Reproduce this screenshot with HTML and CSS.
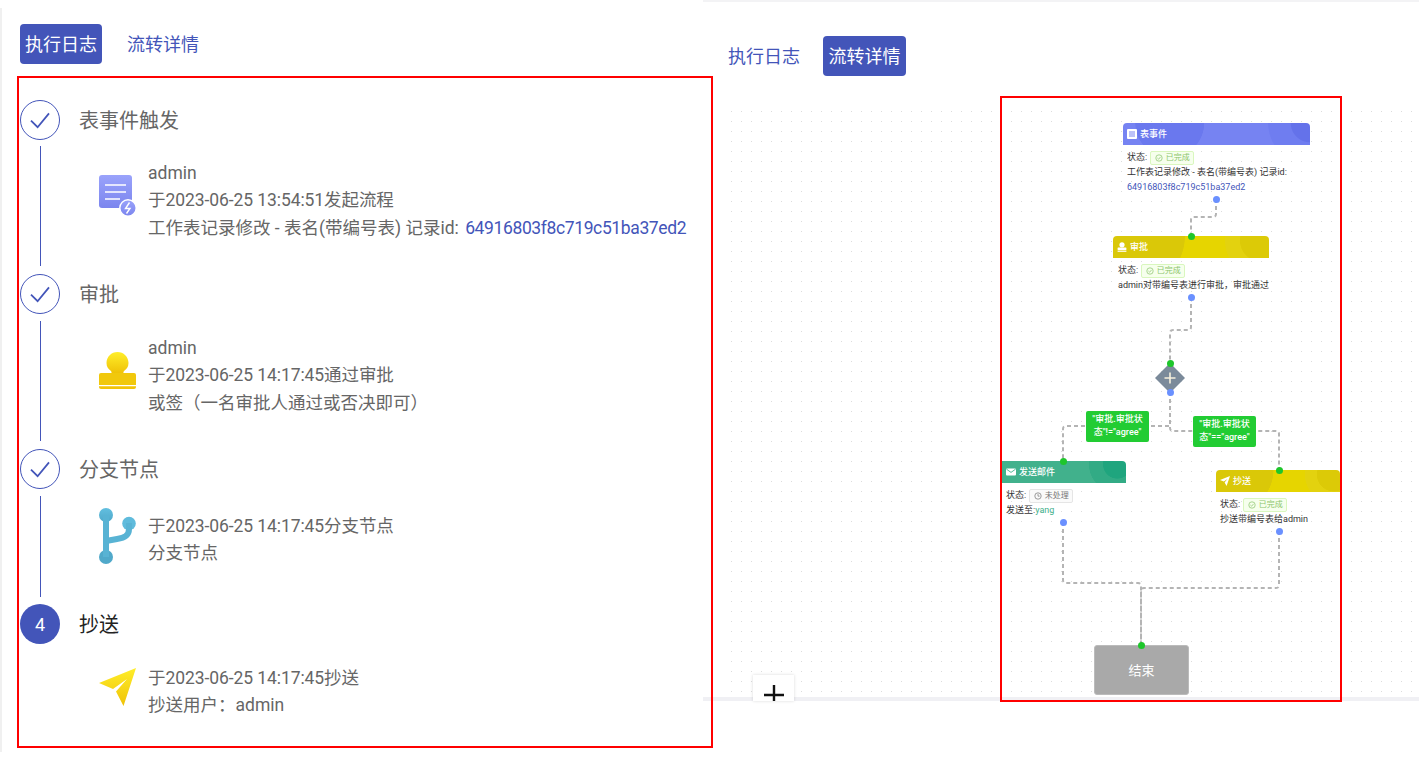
FILE: index.html
```html
<!DOCTYPE html>
<html lang="zh-CN">
<head>
<meta charset="utf-8">
<title>流程详情</title>
<link rel="stylesheet" href="styles.css">
</head>
<body>
<svg class="defs" width="0" height="0" aria-hidden="true">
  <defs>
    <linearGradient id="gBlue" x1="0" y1="0" x2="0" y2="1"><stop offset="0" stop-color="#9aa3fb"/><stop offset="1" stop-color="#7b85ee"/></linearGradient>
    <linearGradient id="gYellow" x1="0" y1="0" x2="0" y2="1"><stop offset="0" stop-color="#ffee2a"/><stop offset="1" stop-color="#efc207"/></linearGradient>
    <linearGradient id="gCyan" x1="0" y1="0" x2="0" y2="1"><stop offset="0" stop-color="#62bfe0"/><stop offset="1" stop-color="#50a9ca"/></linearGradient>
  </defs>
</svg>
<main class="page">
  <section class="log-panel">
    <nav class="tabs">
      <span class="tab active">执行日志</span>
      <span class="tab">流转详情</span>
    </nav>
    <ol class="steps">
      <li class="step">
        <div class="step-head">
          <span class="dot done"><svg viewBox="0 0 20 20" class="check"><path d="M2.5 10.5 L8 16 L17.5 4.5"/></svg></span>
          <span class="step-title">表事件触发</span>
        </div>
        <div class="step-body step-body-a">
          <svg class="step-icon icon-form" viewBox="0 0 37 41">
            <rect x="0" y="0" width="33" height="33" rx="3" fill="url(#gBlue)"/>
            <path d="M6 10H27M6 17H27M6 24H21" stroke="#fff" stroke-width="1.6" fill="none"/>
            <circle cx="29" cy="33" r="8.2" fill="url(#gBlue)" stroke="#fff" stroke-width="1.4"/>
            <path d="M30.5 27.5 L26.5 33.5 H31 L27.5 38.5" stroke="#fff" stroke-width="1.4" fill="none"/>
          </svg>
          <div class="step-text">
            <p>admin</p>
            <p class="time">于2023-06-25 13:54:51发起流程</p>
            <p>工作表记录修改 - 表名(带编号表) 记录id: <a class="rec-link">64916803f8c719c51ba37ed2</a></p>
          </div>
        </div>
      </li>
      <li class="step">
        <div class="step-head">
          <span class="dot done"><svg viewBox="0 0 20 20" class="check"><path d="M2.5 10.5 L8 16 L17.5 4.5"/></svg></span>
          <span class="step-title">审批</span>
        </div>
        <div class="step-body step-body-a">
          <svg class="step-icon icon-stamp" viewBox="0 0 37 37">
            <path d="M18.5 0 C24.6 0 29.5 4.9 29.5 11 C29.5 15 27.4 17 25.6 18.4 C24.6 19.2 24.4 20 24.4 21 H12.6 C12.6 20 12.4 19.2 11.4 18.4 C9.6 17 7.5 15 7.5 11 C7.5 4.9 12.4 0 18.5 0Z" fill="url(#gYellow)"/>
            <path d="M2 21 H35 A2 2 0 0 1 37 23 V33 H0 V23 A2 2 0 0 1 2 21Z" fill="#f1c80c"/>
            <path d="M0 34.2 H37 V35 A2 2 0 0 1 35 37 H2 A2 2 0 0 1 0 35Z" fill="#f2c307"/>
          </svg>
          <div class="step-text">
            <p>admin</p>
            <p class="time">于2023-06-25 14:17:45通过审批</p>
            <p>或签（一名审批人通过或否决即可）</p>
          </div>
        </div>
      </li>
      <li class="step">
        <div class="step-head">
          <span class="dot done"><svg viewBox="0 0 20 20" class="check"><path d="M2.5 10.5 L8 16 L17.5 4.5"/></svg></span>
          <span class="step-title">分支节点</span>
        </div>
        <div class="step-body step-body-b">
          <svg class="step-icon icon-fork" viewBox="0 0 37 56">
            <circle cx="7" cy="7" r="7" fill="url(#gCyan)"/>
            <circle cx="30" cy="15.5" r="6.8" fill="#5fbbdc"/>
            <circle cx="7" cy="49" r="7" fill="#50a9ca"/>
            <path d="M7 7 V49" stroke="#58b3d4" stroke-width="6" fill="none"/>
            <path d="M30 15 V21 C30 28 25 30 18 31 L7 33" stroke="#58b3d4" stroke-width="6" fill="none"/>
          </svg>
          <div class="step-text">
            <p class="time">于2023-06-25 14:17:45分支节点</p>
            <p>分支节点</p>
          </div>
        </div>
      </li>
      <li class="step">
        <div class="step-head">
          <span class="dot current">4</span>
          <span class="step-title current-title">抄送</span>
        </div>
        <div class="step-body step-body-last">
          <svg class="step-icon icon-send" viewBox="0 0 37 38">
            <path d="M37 0 L0 15 L14 21 L28 11 L17 23.5 L24.5 38Z" fill="url(#gYellow)"/>
          </svg>
          <div class="step-text">
            <p class="time">于2023-06-25 14:17:45抄送</p>
            <p>抄送用户：admin</p>
          </div>
        </div>
      </li>
    </ol>
  </section>

  <section class="flow-panel">
    <nav class="tabs tabs-right">
      <span class="tab">执行日志</span>
      <span class="tab active">流转详情</span>
    </nav>
    <div class="canvas">
      <svg class="edges" viewBox="703 100 716 601">
        <path d="M1216 199V214Q1216 217 1213 217H1194Q1191 217 1191 220V236"/>
        <path d="M1191 297V327Q1191 330 1188 330H1173Q1170 330 1170 333V363"/>
        <path d="M1170 392V426H1066Q1063 426 1063 429V461"/>
        <path d="M1170 392V428Q1170 431 1173 431H1276Q1279 431 1279 434V470"/>
        <path d="M1063 522V580Q1063 583 1066 583H1138Q1141 583 1141 586V645"/>
        <path d="M1279 531V585Q1279 588 1276 588H1144Q1141 588 1141 591V645"/>
      </svg>

      <article class="node node-form">
        <header class="node-head head-blue">
          <svg class="node-icon" viewBox="0 0 10 10"><rect width="10" height="10" rx="1" fill="#fff"/><path d="M2 3H8M2 5H8M2 7H8" stroke="#7b85f2" stroke-width="1"/></svg>
          <span>表事件</span>
        </header>
        <div class="node-body">
          <div class="status">状态: <span class="tag tag-ok"><svg class="tag-icon" viewBox="0 0 10 10"><circle cx="5" cy="5" r="4" /><path d="M3 5L4.5 6.5L7 3.6"/></svg>已完成</span></div>
          <p>工作表记录修改 - 表名(带编号表) 记录id:</p>
          <p class="node-link">64916803f8c719c51ba37ed2</p>
        </div>
      </article>

      <article class="node node-approve">
        <header class="node-head head-yellow">
          <svg class="node-icon" viewBox="0 0 10 10"><circle cx="5" cy="2.8" r="2.6" fill="#fff"/><rect x="0.6" y="5.6" width="8.8" height="2.4" rx=".5" fill="#fff"/><rect x="0.6" y="8.6" width="8.8" height="1.2" fill="#fff"/></svg>
          <span>审批</span>
        </header>
        <div class="node-body">
          <div class="status">状态: <span class="tag tag-ok"><svg class="tag-icon" viewBox="0 0 10 10"><circle cx="5" cy="5" r="4" /><path d="M3 5L4.5 6.5L7 3.6"/></svg>已完成</span></div>
          <p>admin对带编号表进行审批，审批通过</p>
        </div>
      </article>

      <div class="gateway"><svg viewBox="0 0 30 30"><path d="M15 0L30 15L15 30L0 15Z" fill="#7b8a9a"/><path d="M15 9.5V20.5M9.5 15H20.5" stroke="#f6efdc" stroke-width="1.6"/></svg></div>

      <div class="cond cond-left">"审批.审批状态"!="agree"</div>
      <div class="cond cond-right">"审批.审批状态"=="agree"</div>

      <article class="node node-mail">
        <header class="node-head head-teal">
          <svg class="node-icon" viewBox="0 0 10 10"><rect y="1.5" width="10" height="7" rx="1" fill="#fff"/><path d="M0.5 2.2L5 5.4L9.5 2.2" stroke="#3eb08b" stroke-width=".9" fill="none"/></svg>
          <span>发送邮件</span>
        </header>
        <div class="node-body">
          <div class="status">状态: <span class="tag tag-wait"><svg class="tag-icon" viewBox="0 0 10 10"><circle cx="5" cy="5" r="4" /><path d="M5 2.6V5.2H7"/></svg>未处理</span></div>
          <p>发送至:<span class="teal-text">yang</span></p>
        </div>
      </article>

      <article class="node node-cc">
        <header class="node-head head-yellow">
          <svg class="node-icon" viewBox="0 0 10 10"><path d="M10 0L0 4L3.8 5.6L7.4 3L4.6 6.4L6.6 10Z" fill="#fff"/></svg>
          <span>抄送</span>
        </header>
        <div class="node-body">
          <div class="status">状态: <span class="tag tag-ok"><svg class="tag-icon" viewBox="0 0 10 10"><circle cx="5" cy="5" r="4" /><path d="M3 5L4.5 6.5L7 3.6"/></svg>已完成</span></div>
          <p>抄送带编号表给admin</p>
        </div>
      </article>

      <div class="end-node">结束</div>

      <i class="port out p1"></i><i class="port in p2"></i>
      <i class="port out p3"></i><i class="port in p4"></i>
      <i class="port out p5"></i><i class="port in p6"></i>
      <i class="port out p7"></i><i class="port in p8"></i>
      <i class="port out p9"></i><i class="port in p10"></i>

      <button class="zoom-btn"><svg viewBox="0 0 20 20"><path d="M10 0V20M0 10H20"/></svg></button>
    </div>
  </section>

  <div class="mark mark-left"></div>
  <div class="mark mark-right"></div>
</main>
</body>
</html>
```

FILE: styles.css
```css
* { box-sizing: border-box; }
html, body { margin: 0; padding: 0; background: #fff; }
body {
  font-family: Roboto, "Noto Sans CJK SC", sans-serif;
  color: #666;
  overflow: hidden;
}
.defs { position: absolute; }
.page { position: relative; display: flex; width: 1419px; height: 768px; overflow: hidden; }

/* tabs */
.tabs { display: flex; gap: 20px; height: 40px; }
.tab {
  width: 82px;
  height: 40px;
  line-height: 42px;
  text-align: center;
  font-size: 18px;
  color: #4355b9;
  border-radius: 4px;
}
.tab.active { background: #4355b9; color: #fff; }

/* left panel */
.log-panel {
  width: 703px;
  height: 744px;
  margin-top: 8px;
  padding: 16px 0 0 18px;
  border-left: 2px solid #f0f0f0;
}
.steps { list-style: none; margin: 36px 0 0; padding: 0; }
.step-head { display: flex; align-items: center; gap: 20px; height: 40px; }
.dot {
  display: flex;
  align-items: center;
  justify-content: center;
  width: 40px;
  height: 40px;
  border-radius: 50%;
  font-size: 18px;
}
.dot.done { border: 1px solid #4355b9; }
.dot.current { background: #4355b9; color: #fff; }
.check { width: 24px; height: 24px; fill: none; stroke: #4355b9; stroke-width: 1.5; }
.step-title { font-size: 20px; line-height: 40px; color: #666; position: relative; top: 1px; left: -1px; }
.current-title { color: #222; }
.step-body {
  display: flex;
  align-items: center;
  gap: 13px;
  margin: 7px 0 8px 20px;
  height: 120px;
  padding-left: 58px;
  border-left: 1px solid #4355b9;
}
.step:first-child .step-body { margin-top: 6px; }
.step-body-a { padding-bottom: 10px; }
.step-body-b { height: 101px; padding-bottom: 13px; margin-bottom: 7px; }
.step-body-last { height: 94px; border-left-color: transparent; margin-top: 0; padding-top: 2px; padding-bottom: 0; }
.step-icon { flex: none; width: 37px; }
.icon-form { height: 41px; margin-bottom: 11px; }
.icon-stamp { height: 37px; margin-bottom: 12px; }
.icon-fork { height: 56px; margin-bottom: 8px; }
.icon-send { height: 38px; margin-bottom: 10px; }
.step-text { font-size: 17.5px; line-height: 27.5px; color: #666; white-space: nowrap; margin-left: -1px; }
.step-text p { margin: 0; }
.step-text .time { letter-spacing: -0.08px; }
.rec-link { color: #4355b9; letter-spacing: -0.38px; margin-left: 2px; }

/* right panel */
.flow-panel { position: relative; flex: 1; border-top: 2px solid #f3f3f5; padding-top: 34px; }
.tabs-right { margin-left: 20px; gap: 18px; }
.tabs-right .active { width: 83px; }
.canvas {
  position: absolute;
  left: 0;
  top: 98px;
  width: 716px;
  height: 601px;
  border-bottom: 4px solid #f0f0f4;
  font-size: 9px;
  color: #333;
}
.canvas::before {
  content: "";
  position: absolute;
  left: 28px;
  top: 11px;
  width: 681px;
  height: 581px;
  background-image: radial-gradient(circle at 0.5px 0.5px, #dcdcdc 0.7px, transparent 1px);
  background-size: 10px 10px;
}
.edges { position: absolute; left: 0; top: 0; width: 716px; height: 601px; fill: none; stroke: #b4b4b4; stroke-width: 2; stroke-dasharray: 4 3; }

/* nodes */
.node { position: absolute; line-height: 15px; white-space: nowrap; }
.node-form { left: 420px; top: 23px; width: 187px; }
.node-approve { left: 410px; top: 136px; width: 156px; }
.node-mail { left: 299px; top: 361px; width: 124px; }
.node-cc { left: 513px; top: 370px; width: 124px; }
.node-head {
  position: relative;
  display: flex;
  align-items: center;
  gap: 3px;
  height: 22px;
  padding-left: 4px;
  font-size: 9px;
  font-weight: 500;
  color: #fff;
  overflow: hidden;
}
.head-blue { background: radial-gradient(circle at 25% 0, #6a78ee 0 24%, transparent 24.5%), radial-gradient(circle at 100% 0, #6472ea 0 10%, #6f7df0 10.5% 22%, transparent 22.5%), #7683f2; border-radius: 4px 4px 0 0; }
.head-yellow { background: radial-gradient(circle at 12% 0, #dac808 0 38%, transparent 38.5%), radial-gradient(circle at 95% 20%, #dcca07 0 14%, #e3d20f 14.5% 24%, transparent 24.5%), #e6d500; border-radius: 4px 4px 0 0; }
.head-teal { background: radial-gradient(circle at 93% 15%, #1fa57e 0 12%, #32ab85 12.5% 24%, transparent 24.5%), #41b18c; border-radius: 0 4px 0 0; }
.node-icon { width: 10px; height: 10px; flex: none; }
.node-body { padding: 5px 5px 0 4px; }
.node-approve .node-body { padding-left: 5px; }
.node-body p { margin: 0; }
.status { display: flex; align-items: center; gap: 3px; height: 15px; }
.tag {
  display: inline-flex;
  align-items: center;
  gap: 3px;
  height: 14px;
  padding: 0 3.5px;
  font-size: 8px;
  border-radius: 2px;
  border: 1px solid #d9f7be;
  background: #f6ffed;
  color: #8cc56c;
}
.tag-wait { border-color: #e5e5e5; background: #fafafa; color: #777; }
.tag-icon { width: 8px; height: 8px; fill: none; stroke: currentColor; stroke-width: .9; }
.node-link { color: #4355b9; }
.teal-text { color: #3eb08b; }

.gateway { position: absolute; left: 452px; top: 263px; width: 30px; height: 30px; }
.gateway svg { display: block; width: 30px; height: 30px; }
.cond {
  position: absolute;
  width: 63px;
  height: 31px;
  padding: 2px 3px;
  background: #22cc33;
  border-radius: 2px;
  color: #fff;
  font-size: 9px;
  line-height: 13px;
  text-align: center;
  word-break: break-all;
  font-weight: 500;
}
.cond-left { left: 383px; top: 311px; }
.cond-right { left: 490px; top: 316px; }
.end-node {
  position: absolute;
  left: 391px;
  top: 545px;
  width: 95px;
  height: 50px;
  line-height: 50px;
  text-align: center;
  background: #a9a9a9;
  border: 1px solid #bbb;
  border-radius: 3px;
  color: #fff;
  font-size: 13px;
}

/* ports */
.port { position: absolute; width: 7px; height: 7px; margin: -3.5px 0 0 -3.5px; border-radius: 50%; }
.port.out { background: #6a90ff; }
.port.in { background: #1ec62b; }
.p1 { left: 513px; top: 99px; }
.p2 { left: 488px; top: 136px; }
.p3 { left: 488px; top: 197px; }
.p4 { left: 467px; top: 263px; }
.p5 { left: 467px; top: 292px; }
.p6 { left: 360px; top: 361px; }
.p7 { left: 360px; top: 422px; }
.p8 { left: 576px; top: 370px; }
.p9 { left: 576px; top: 431px; }
.p10 { left: 438px; top: 545px; }

.zoom-btn {
  position: absolute;
  left: 50px;
  top: 575px;
  width: 41px;
  height: 26px;
  padding: 0;
  border: 0;
  background: #fff;
  box-shadow: 0 0 3px rgba(0,0,0,.15);
  overflow: hidden;
}
.zoom-btn svg { display: block; width: 20px; height: 20px; margin: 10px auto 0; fill: none; stroke: #111; stroke-width: 2.4; }

/* annotation frames */
.mark { position: absolute; border: 2px solid #f00; pointer-events: none; }
.mark-left { left: 17px; top: 76px; width: 696px; height: 672px; }
.mark-right { left: 1000px; top: 96px; width: 342px; height: 606px; }
```
